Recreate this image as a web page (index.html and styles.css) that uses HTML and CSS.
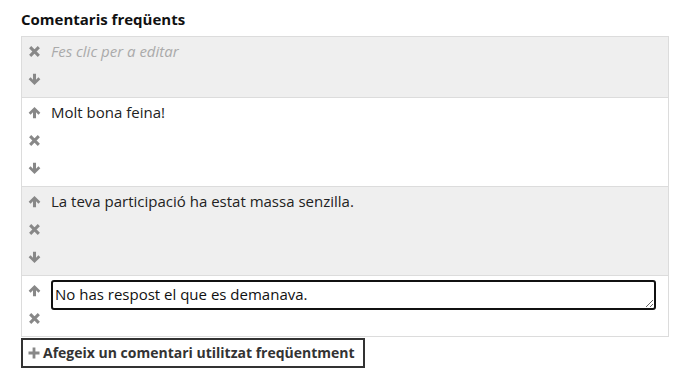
FILE: index.html
```html
<!DOCTYPE html>
<html lang="ca">
<head>
<meta charset="utf-8">
<link rel="stylesheet" href="styles.css">
</head>
<body>
<div class="page">
  <h3 class="title">Comentaris freqüents</h3>
  <div class="list">
    <div class="row alt">
      <div class="tools">
        <span class="ic"><svg viewBox="0 0 12 12"><path d="M2 2 L10 10 M10 2 L2 10" /></svg></span>
        <span class="ic"><svg viewBox="0 0 12 12" class="fill"><path d="M4.6 0.8 H7.4 V6.2 L9.6 4 L11.4 5.7 L6 11.1 L0.6 5.7 L2.4 4 L4.6 6.2 Z"/></svg></span>
      </div>
      <div class="text placeholder">Fes clic per a editar</div>
    </div>
    <div class="row">
      <div class="tools">
        <span class="ic"><svg viewBox="0 0 12 12" class="fill"><path d="M4.6 11.2 H7.4 V5.8 L9.6 8 L11.4 6.3 L6 0.9 L0.6 6.3 L2.4 8 L4.6 5.8 Z"/></svg></span>
        <span class="ic"><svg viewBox="0 0 12 12"><path d="M2 2 L10 10 M10 2 L2 10" /></svg></span>
        <span class="ic"><svg viewBox="0 0 12 12" class="fill"><path d="M4.6 0.8 H7.4 V6.2 L9.6 4 L11.4 5.7 L6 11.1 L0.6 5.7 L2.4 4 L4.6 6.2 Z"/></svg></span>
      </div>
      <div class="text">Molt bona feina!</div>
    </div>
    <div class="row alt">
      <div class="tools">
        <span class="ic"><svg viewBox="0 0 12 12" class="fill"><path d="M4.6 11.2 H7.4 V5.8 L9.6 8 L11.4 6.3 L6 0.9 L0.6 6.3 L2.4 8 L4.6 5.8 Z"/></svg></span>
        <span class="ic"><svg viewBox="0 0 12 12"><path d="M2 2 L10 10 M10 2 L2 10" /></svg></span>
        <span class="ic"><svg viewBox="0 0 12 12" class="fill"><path d="M4.6 0.8 H7.4 V6.2 L9.6 4 L11.4 5.7 L6 11.1 L0.6 5.7 L2.4 4 L4.6 6.2 Z"/></svg></span>
      </div>
      <div class="text">La teva participació ha estat massa senzilla.</div>
    </div>
    <div class="row">
      <div class="tools">
        <span class="ic"><svg viewBox="0 0 12 12" class="fill"><path d="M4.6 11.2 H7.4 V5.8 L9.6 8 L11.4 6.3 L6 0.9 L0.6 6.3 L2.4 8 L4.6 5.8 Z"/></svg></span>
        <span class="ic"><svg viewBox="0 0 12 12"><path d="M2 2 L10 10 M10 2 L2 10" /></svg></span>
      </div>
      <div class="text edit"><textarea class="box" rows="1">No has respost el que es demanava.</textarea></div>
    </div>
  </div>
  <button class="add"><svg class="plus" viewBox="0 0 12 12"><path d="M6 0.5 V11.5 M0.5 6 H11.5"/></svg>Afegeix un comentari utilitzat freqüentment</button>
</div>
</body>
</html>
```
FILE: styles.css
```css
html, body {
  margin: 0;
  padding: 0;
  background: #fff;
}
body {
  font-family: "Open Sans", "Noto Sans", sans-serif;
  font-size: 15px;
  color: #222;
}
.page {
  padding: 9px 17px 0 21px;
}
.title {
  margin: 0 0 7px 0;
  font-size: 15px;
  font-weight: bold;
  line-height: 20px;
  color: #111;
}
.list {
  border: 1px solid #dcdcdc;
  border-bottom: none;
}
.row {
  display: flex;
  border-bottom: 1px solid #dcdcdc;
  padding: 0 0 4px 0;
  background: #fff;
}
.row.alt {
  background: #efefef;
}
.tools {
  width: 29px;
  display: flex;
  flex-direction: column;
}
.ic {
  height: 28px;
  display: flex;
  align-items: center;
  padding-left: 6px;
}
.ic svg {
  width: 13px;
  height: 13px;
  stroke: #888;
  stroke-width: 2.8;
  fill: none;
}
.ic svg.fill {
  fill: #888;
  stroke: none;
}
.text {
  flex: 1;
  line-height: 28px;
  font-size: 15px;
  color: #222;
  padding-right: 12px;
}
.placeholder {
  font-style: italic;
  color: #aaa;
}
.edit {
  padding-top: 4px;
}
.box {
  display: block;
  width: 100%;
  box-sizing: border-box;
  height: 30px;
  border: 2px solid #111;
  border-radius: 3px;
  font-family: inherit;
  font-size: 15px;
  padding: 0 2px;
  line-height: 24px;
  color: #111;
  resize: vertical;
  overflow: hidden;
}
.add {
  display: flex;
  align-items: center;
  margin-top: 1px;
  font-family: inherit;
  font-size: 14px;
  font-weight: bold;
  color: #333;
  background: #fff;
  border: 2px solid #333;
  padding: 2px 8px 2px 5px;
  line-height: 22px;
}
.plus {
  width: 12px;
  height: 12px;
  stroke: #888;
  stroke-width: 2.8;
  fill: none;
  margin-right: 3px;
}
```
